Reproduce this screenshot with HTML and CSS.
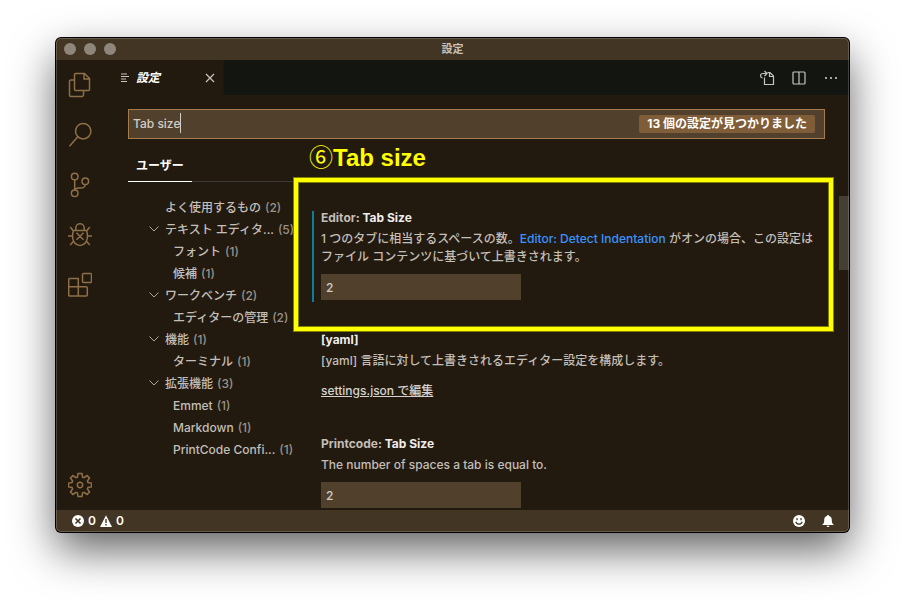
FILE: index.html
```html
<!DOCTYPE html>
<html lang="ja">
<head>
<meta charset="utf-8">
<title>設定</title>
<link rel="stylesheet" href="styles.css">
</head>
<body>
<div class="window">
  <header class="titlebar">
    <div class="lights"><span class="light"></span><span class="light"></span><span class="light"></span></div>
    <span class="window-title">設定</span>
  </header>
  <div class="workbench">
    <nav class="activity">
      <button class="activity-btn" aria-label="エクスプローラー"><svg width="24" height="26" viewBox="0 0 24 26"><path d="M7.5 1.5h9l5 5v11a1 1 0 0 1-1 1h-13a1 1 0 0 1-1-1v-15a1 1 0 0 1 1-1zM16 1.500v5.500h5.500M6.500 8H3a1.500 1.500 0 0 0-1.500 1.500V23A1.500 1.500 0 0 0 3 24.500h11a1.500 1.500 0 0 0 1.500-1.500v-4.500"/></svg></button>
      <button class="activity-btn" aria-label="検索"><svg width="24" height="26" viewBox="0 0 24 26"><circle cx="15.200" cy="9.200" r="7.700"/><path d="M9.800 14.700 1.500 24.300"/></svg></button>
      <button class="activity-btn" aria-label="ソース管理"><svg width="24" height="26" viewBox="0 0 24 26"><circle cx="6.700" cy="4.500" r="3.300"/><circle cx="6.700" cy="21.300" r="3.300"/><circle cx="17.300" cy="9.200" r="3.300"/><path d="M6.700 7.800V18M17.300 12.500c-.3 2.500-1.800 3.500-4.300 3.500H11c-2.500 0-4 .8-4.300 2.300"/></svg></button>
      <button class="activity-btn" aria-label="デバッグ"><svg width="24" height="26" viewBox="0 0 24 26"><path d="M5.500 8.500h13c.6 1.500 1 3.500 1 5.500 0 5.500-3 9.500-7.500 9.500S4.500 19.500 4.500 14c0-2 .4-4 1-5.500zM7.800 8.500V6a4.200 4.200 0 0 1 8.400 0v2.500M4.500 14H0M24 14h-4.500M5.200 8.800 2.200 5M18.800 8.800l3-3.800M5.800 19l-3.600 4M18.200 19l3.600 4M8.500 10.800l7 7M15.500 10.800l-7 7"/></svg></button>
      <button class="activity-btn" aria-label="拡張機能"><svg width="24" height="26" viewBox="0 0 24 26"><rect x="14.500" y="1.500" width="9" height="9" rx="1"/><path d="M1.700 6.500h8.600v8.300h8a1 1 0 0 1 1 1V23a1 1 0 0 1-1 1H1.700a1 1 0 0 1-1-1V7.500a1 1 0 0 1 1-1zM.7 14.800h9.600V24"/></svg></button>
      <button class="activity-btn manage" aria-label="管理"><svg width="24" height="26" viewBox="-12 -13 24 26"><path d="M-2-11.500h4l.6 3.600 1.500.6 3-2.100 2.400 2.400-2.100 3 .6 1.500 3.500.6v3.800l-3.500.6-.6 1.500 2.100 3-2.400 2.400-3-2.100-1.500.6-.6 3.600h-4l-.6-3.600-1.500-.6-3 2.100-2.400-2.400 2.100-3-.6-1.500-3.500-.6v-3.800l3.500-.6.6-1.500-2.100-3 2.400-2.400 3 2.100 1.500-.6z"/><circle r="2.700"/></svg></button>
    </nav>
    <main class="editor">
      <div class="tabs">
        <div class="tab">
          <svg class="tab-icon" width="10" height="10" viewBox="0 0 10 10"><path d="M1 1h6M1 3.500h8M1 6h5M1 8.500h6"/></svg>
          <span class="tab-name">設定</span>
          <button class="icon-btn close" aria-label="閉じる"><svg width="10" height="10" viewBox="0 0 10 10"><path d="M1 1l8 8M9 1 1 9"/></svg></button>
        </div>
        <div class="tab-actions">
          <button class="icon-btn" aria-label="設定 (JSON) を開く"><svg width="16" height="16" viewBox="0 0 16 16"><path d="M5.500 7.500v7h9V6L11 2.500H8.500M10.500 2.500V6.500h4M3.500 8C1 7.500.8 3.500 4 3.500h3.500M5.500 1l2.500 2.500L5.500 6"/></svg></button>
          <button class="icon-btn" aria-label="エディターを分割"><svg width="16" height="16" viewBox="0 0 16 16"><rect x="2" y="2" width="12" height="12" rx="1"/><path d="M8 2v12"/></svg></button>
          <button class="icon-btn" aria-label="その他の操作"><svg class="dots" width="16" height="16" viewBox="0 0 16 16"><path d="M2 7h2v2H2zM7 7h2v2H7zM12 7h2v2h-2z"/></svg></button>
        </div>
      </div>
      <div class="settings">
        <div class="search">
          <input class="search-input" type="text" value="Tab size" aria-label="設定の検索">
          <span class="caret"></span>
          <span class="badge">13 個の設定が見つかりました</span>
        </div>
        <div class="scopes"><button class="scope">ユーザー</button></div>
        <div class="columns">
          <ul class="toc">
            <li class="row"><span class="name">よく使用するもの</span><span class="count">(2)</span></li>
            <li class="row"><svg class="chev" width="10" height="6" viewBox="0 0 10 6"><path d="M.5.500 5 5 9.500.500"/></svg><span class="name">テキスト エディタ...</span><span class="count">(5)</span></li>
            <li class="row sub"><span class="name">フォント</span><span class="count">(1)</span></li>
            <li class="row sub"><span class="name">候補</span><span class="count">(1)</span></li>
            <li class="row"><svg class="chev" width="10" height="6" viewBox="0 0 10 6"><path d="M.5.500 5 5 9.500.500"/></svg><span class="name">ワークベンチ</span><span class="count">(2)</span></li>
            <li class="row sub"><span class="name">エディターの管理</span><span class="count">(2)</span></li>
            <li class="row"><svg class="chev" width="10" height="6" viewBox="0 0 10 6"><path d="M.5.500 5 5 9.500.500"/></svg><span class="name">機能</span><span class="count">(1)</span></li>
            <li class="row sub"><span class="name">ターミナル</span><span class="count">(1)</span></li>
            <li class="row"><svg class="chev" width="10" height="6" viewBox="0 0 10 6"><path d="M.5.500 5 5 9.500.500"/></svg><span class="name">拡張機能</span><span class="count">(3)</span></li>
            <li class="row sub"><span class="name">Emmet</span><span class="count">(1)</span></li>
            <li class="row sub"><span class="name">Markdown</span><span class="count">(1)</span></li>
            <li class="row sub"><span class="name">PrintCode Confi...</span><span class="count">(1)</span></li>
          </ul>
          <div class="list">
            <section class="item modified">
              <label class="item-title" for="editor-tab">Editor: <b>Tab Size</b></label>
              <p class="desc">1 つのタブに相当するスペースの数。<a class="ref" href="#detect">Editor: Detect Indentation</a> がオンの場合、この設定はファイル コンテンツに基づいて上書きされます。</p>
              <input class="value" id="editor-tab" type="text" value="2">
            </section>
            <section class="item">
              <div class="item-title"><b>[yaml]</b></div>
              <p class="desc">[yaml] 言語に対して上書きされるエディター設定を構成します。</p>
              <a class="json" href="#json">settings.json で編集</a>
            </section>
            <section class="item">
              <label class="item-title" for="print-tab">Printcode: <b>Tab Size</b></label>
              <p class="desc">The number of spaces a tab is equal to.</p>
              <input class="value" id="print-tab" type="text" value="2">
            </section>
          </div>
          <div class="scrollbar"></div>
        </div>
        <div class="callout"><span class="callout-text"><span class="step">⑥</span>Tab size</span></div>
      </div>
    </main>
  </div>
  <footer class="status">
    <button class="status-item" aria-label="エラー 0、警告 0">
      <svg width="12" height="12" viewBox="0 0 12 12"><circle cx="6" cy="6" r="6" fill="#fff"/><path d="M3.500 3.500l5 5M8.500 3.500l-5 5" stroke="#423523" stroke-width="1.600"/></svg><span>0</span>
      <svg width="12" height="12" viewBox="0 0 12 12"><path d="M6 .3 12 12H0z" fill="#fff"/><path d="M6 4v4M6 9v1.500" stroke="#423523" stroke-width="1.400"/></svg><span>0</span>
    </button>
    <div class="status-right">
      <button class="status-item" aria-label="フィードバック"><svg width="12" height="12" viewBox="0 0 12 12"><circle cx="6" cy="6" r="6" fill="#fff"/><path d="M4 3v2.200M8 3v2.200M2.800 6.800c1 3.200 5.400 3.200 6.400 0" fill="none" stroke="#423523" stroke-width="1.200"/></svg></button>
      <button class="status-item" aria-label="通知"><svg width="12" height="12" viewBox="0 0 12 12"><path d="M6 0c.6 0 1 .4 1 1 2 .5 2.800 2 2.800 4 0 2.500.4 3.500 2.200 5H0c1.800-1.500 2.200-2.500 2.200-5 0-2 .8-3.500 2.800-4 0-.6.4-1 1-1zM4.500 10.800h3C7.300 11.600 6.700 12 6 12s-1.300-.4-1.500-1.200z" fill="#fff"/></svg></button>
    </div>
  </footer>
</div>
</body>
</html>
```
FILE: styles.css
```css
* { box-sizing: border-box; }
body {
  margin: 0;
  height: 100vh;
  padding: 38px 56px 74px;
  display: flex;
  background: #fff;
  color: #c2beb8;
  font: 500 12px/18px Inter, "Noto Sans CJK JP", sans-serif;
  overflow: hidden;
}
button {
  margin: 0;
  padding: 0;
  border: 0;
  background: none;
  color: inherit;
  font: inherit;
  display: flex;
  align-items: center;
  justify-content: center;
}
input { font: inherit; color: #d0ccc6; outline: 0; border-radius: 0; }
svg { flex: none; }

.window {
  flex: 1;
  min-width: 0;
  display: flex;
  flex-direction: column;
  position: relative;
  border-radius: 5px;
  overflow: hidden;
  background: #221a0f;
  box-shadow: 0 0 0 1px #000, 0 18px 44px rgba(0, 0, 0, .62);
}
.window::after {
  content: "";
  position: absolute;
  inset: 0;
  border: 1px solid rgba(255, 255, 255, .2);
  border-radius: 5px;
  pointer-events: none;
}
.titlebar {
  height: 22px;
  flex: none;
  display: grid;
  grid-template-columns: 1fr auto 1fr;
  align-items: center;
  background: #423523;
}
.lights { display: flex; gap: 8px; padding-left: 8px; }
.light { width: 12px; height: 12px; border-radius: 50%; background: #8e867b; }
.window-title { font-size: 11px; font-weight: 600; color: #c8c3bc; }

.workbench { flex: 1; min-height: 0; display: flex; }
.activity { width: 48px; flex: none; display: flex; flex-direction: column; }
.activity-btn { height: 50px; }
.activity-btn svg { fill: none; stroke: #8f6f48; stroke-width: 1.500; }
.manage { margin-top: auto; }

.editor { flex: 1; min-width: 0; display: flex; flex-direction: column; }
.tabs { height: 35px; flex: none; display: flex; justify-content: space-between; background: #131510; }
.tab {
  width: 120px;
  padding: 0 8px 0 16px;
  display: flex;
  align-items: center;
  gap: 6px;
  background: #221a0f;
  border-right: 1px solid #191811;
}
.tab-icon { stroke: #c8c5c0; }
.tab-name { flex: 1; color: #fff; font-weight: 700; font-style: italic; }
.icon-btn svg { fill: none; stroke: #c8c5c0; stroke-width: 1.200; }
.icon-btn .dots { fill: #a5a5a2; stroke: none; }
.tab-actions { display: flex; gap: 16px; padding-right: 10px; }

.settings { flex: 1; min-height: 0; position: relative; display: flex; flex-direction: column; padding: 14px 0 0 24px; }
.search { position: relative; margin-right: 24px; display: flex; }
.search-input {
  flex: 1;
  min-width: 0;
  height: 30px;
  padding: 0 190px 2px 4px;
  background: #51412c;
  border: 1px solid #a57a4c;
}
.caret { position: absolute; left: 52px; top: 4px; width: 1px; height: 20px; background: #d0ccc6; }
.badge {
  position: absolute;
  right: 10px;
  top: 6px;
  padding: 0 8px;
  border-radius: 2px;
  background: #7f5d38;
  color: #fff;
  font-weight: 700;
}
.scopes { margin: 11px 24px 0 0; height: 32px; display: flex; border-bottom: 1px solid #3c3a36; }
.scope { height: 32px; padding: 0 8px; color: #fff; font-weight: 600; border-bottom: 1px solid #fff; }

.columns { flex: 1; min-height: 0; display: flex; margin-top: 14px; overflow: hidden; }
.toc { width: 167px; flex: none; margin: 0; padding: 0; list-style: none; }
.row { height: 22px; display: flex; align-items: center; gap: 4px; padding: 2px 0 0 37px; position: relative; white-space: nowrap; }
.sub { padding-left: 45px; }
.chev { position: absolute; left: 21px; top: 8px; fill: none; stroke: #aaa6a0; }
.count { color: #97928b; }

.list { flex: 1; min-width: 0; padding: 13px 18px 0 17px; }
.item { padding: 0 0 31px 9px; position: relative; }
.modified::before { content: ""; position: absolute; left: 0; top: 2px; bottom: 29px; width: 2px; background: #0c7d9d; }
.item-title { display: block; font-weight: 700; }
.item-title b { color: #efedeb; font-weight: 700; }
.desc { margin: 3px 0 8px; }
.ref { color: #3794ff; text-decoration: none; }
.value { display: block; width: 200px; height: 26px; padding: 0 5px; border: 0; background: #51412c; }
.json { display: block; width: fit-content; line-height: 26px; color: #d6d3ce; text-decoration: underline; }
.scrollbar { width: 10px; height: 74px; flex: none; background: #453e35; }

.callout {
  position: absolute;
  left: 189px;
  right: 15px;
  top: 82px;
  height: 155px;
  border: 5px solid #ff0;
  outline: 1px solid #808000;
  outline-offset: -1px;
  box-shadow: inset 0 0 0 1px #808000;
  pointer-events: none;
}
.callout-text {
  position: absolute;
  left: 11px;
  bottom: 100%;
  margin-bottom: 8px;
  color: #ff0;
  font: 700 24px/32px "Liberation Sans", "Noto Sans CJK JP", sans-serif;
  white-space: nowrap;
}
.step { font-weight: 400; }

.status { height: 22px; flex: none; display: flex; justify-content: space-between; padding: 0 15px 0 16px; background: #423523; color: #fff; }
.status-item { gap: 4px; font-weight: 600; }
.status-right { display: flex; gap: 17px; }
```
